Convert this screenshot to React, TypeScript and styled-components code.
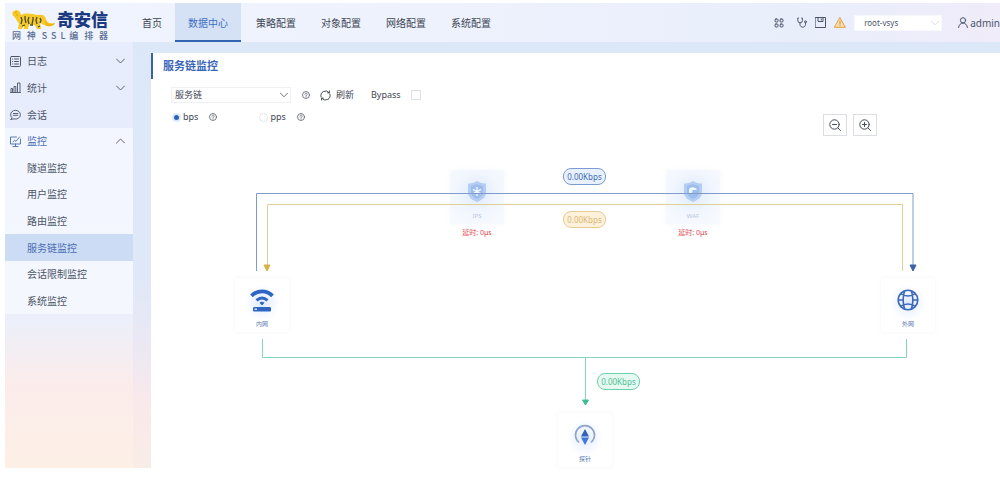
import React from 'react';
import styled, { createGlobalStyle, css } from 'styled-components';

const GlobalStyle = createGlobalStyle`
  * { box-sizing: border-box; }
  body {
    margin: 0;
    background: #fff;
    color: #3f4654;
    font-family: "Noto Sans", "Noto Sans CJK SC", sans-serif;
    font-size: 10px;
    line-height: 16px;
    overflow: hidden;
  }
  button, select, input { font: inherit; color: inherit; margin: 0; }
  a { color: inherit; text-decoration: none; }
  ul { list-style: none; margin: 0; padding: 0; }
  svg { display: block; flex: none; }
`;

const Page = styled.div`
  margin: 3px 0 9px 5px;
  min-height: calc(100vh - 12px);
  display: flex;
  flex-direction: column;
  background:
    linear-gradient(180deg, #e7edfd 0, #e6ecfc 45%, #eceffa 68%, #fbeceb 82%, #fdf0e6 100%);
`;

const Header = styled.header`
  display: flex;
  align-items: stretch;
  height: 39px;
  background: linear-gradient(90deg, #f0f4fe 0, #edf2fd 45%, #e9eefb 80%, #f0ecfa 100%);
`;

const Brand = styled.div`
  width: 96px;
  margin: 6px 22px 0 7px;
`;

const BrandRow = styled.div`
  display: flex;
  align-items: center;
  justify-content: space-between;
  height: 22px;
`;

const BrandName = styled.span`
  color: #1c3a80;
  font-size: 17px;
  font-weight: 900;
  line-height: 22px;
  white-space: nowrap;
`;

const BrandSub = styled.div`
  color: #5b6c94;
  font-family: "Noto Sans CJK SC", sans-serif;
  font-size: 9px;
  font-weight: 500;
  line-height: 10px;
  text-align-last: justify;
`;

const TopNav = styled.nav`
  display: flex;
  gap: 1px;
`;

const TopLink = styled.a<{ $active?: boolean }>`
  display: flex;
  align-items: center;
  padding: 2px 12px 0;
  border-bottom: 2px solid transparent;
  white-space: nowrap;
  ${p => p.$active && css`
    margin-right: 2px;
    padding: 2px 13px 0;
    color: #3f6fc4;
    border-color: #3563b4;
    background: #d5e1f5;
  `}
`;

const Tools = styled.div`
  display: flex;
  align-items: center;
  margin-left: auto;
  gap: 8px;
  color: #4c5568;
`;

const ToolButton = styled.button<{ $wide?: boolean }>`
  display: flex;
  padding: 0;
  margin-right: ${p => (p.$wide ? '5px' : '0')};
  border: 0;
  background: none;
`;

const SelectBox = styled.div<{ $width: number; $edge: string }>`
  position: relative;
  width: ${p => p.$width}px;
  border: 1px solid ${p => p.$edge};
  background: #fff;
  select {
    display: block;
    width: 100%;
    height: 14px;
    padding: 0 16px 0 ${p => (p.$width < 100 ? '9px' : '3px')};
    border: 0;
    background: none;
    appearance: none;
    font-size: ${p => (p.$width < 100 ? '8px' : '9px')};
    line-height: 14px;
  }
  svg {
    position: absolute;
    top: 4px;
    right: 2px;
    pointer-events: none;
  }
`;

const User = styled.a`
  display: flex;
  align-items: center;
  gap: 2px;
  margin-left: 8px;
`;

const Body = styled.div`
  flex: 1;
  display: flex;
`;

const Sidebar = styled.nav`
  flex: 0 0 128px;
  padding-top: 6px;
`;

const MenuGroup = styled.ul<{ $rows: number; $open?: boolean }>`
  display: grid;
  grid-auto-rows: 1fr;
  min-height: ${p => (p.$rows === 3 ? '80px' : '186px')};
  background: ${p => (p.$open ? 'rgba(247, 250, 255, 0.75)' : 'none')};
`;

const MenuItem = styled.a<{ $active?: boolean; $tone?: 'open' }>`
  display: flex;
  align-items: center;
  height: 100%;
  padding: 0 8px 0 5px;
  gap: 6px;
  color: ${p => (p.$active || p.$tone ? '#4a6cb3' : '#4c5568')};
  background: ${p => (p.$active ? '#ccdcf5' : 'none')};
  span { flex: 1; }
`;

const SubItem = styled(MenuItem)`
  padding-left: 22px;
`;

const Main = styled.main`
  flex: 1;
  min-width: 0;
  padding: 11px 0 0 18px;
  background: linear-gradient(180deg, #dce8f8 0, #dfe8f9 55%, #ece8f3 72%, #f9e9eb 85%, #f8ede6 100%);
`;

const Panel = styled.section`
  height: 100%;
  background: #fff;
`;

const Title = styled.h1`
  margin: 0;
  padding: 0 10px;
  border-left: 2px solid #3c5f9f;
  color: #3b66b8;
  font-size: 11px;
  font-weight: 700;
  line-height: 26px;
`;

const Filters = styled.div`
  display: flex;
  align-items: center;
  height: 16px;
  margin: 8px 0 0 20px;
  font-size: 9px;
`;

const Help = styled.span`
  display: flex;
  margin-left: 11px;
`;

const Refresh = styled.button`
  display: flex;
  align-items: center;
  gap: 5px;
  margin: 0 17px 0 10px;
  padding: 0;
  border: 0;
  background: none;
`;

const CheckLabel = styled.label`
  display: flex;
  align-items: center;
  gap: 10px;
  font-size: 9px;
  input {
    width: 10px;
    height: 10px;
    appearance: none;
    border: 1px solid #dfe1e5;
    background: #fff;
  }
`;

const Radios = styled.fieldset`
  display: flex;
  align-items: center;
  height: 16px;
  margin: 6px 0 0 21px;
  padding: 0;
  border: 0;
  font-size: 9px;
`;

const RadioLabel = styled.label<{ $gap?: boolean }>`
  display: flex;
  align-items: center;
  gap: 2px;
  margin-left: ${p => (p.$gap ? '42px' : '0')};
  input {
    width: 9px;
    height: 9px;
    appearance: none;
    border: 1px solid #e3e6ea;
    border-radius: 50%;
    background: #fff;
  }
  input:checked {
    border: 2px solid #dbe8fb;
    background: #2f62b5;
  }
`;

const Canvas = styled.div`
  position: relative;
  height: 342px;
`;

const Wires = styled.svg`
  position: absolute;
  top: 0;
  left: 0;
  z-index: 1;
`;

const ZoomTools = styled.div`
  position: absolute;
  top: -11px;
  left: 672px;
  display: flex;
  gap: 6px;
`;

const ZoomButton = styled.button`
  display: grid;
  place-items: center;
  width: 24px;
  height: 22px;
  padding: 0;
  border: 1px solid #dcdee2;
  background: #fff;
`;

const Node = styled.figure<{ $x: number; $y: number; $faded?: boolean }>`
  position: absolute;
  left: ${p => p.$x}px;
  top: ${p => p.$y}px;
  display: flex;
  flex-direction: column;
  align-items: center;
  width: 54px;
  height: 54px;
  margin: 0;
  padding-top: 10px;
  border-radius: 2px;
  background: ${p => (p.$faded
    ? 'radial-gradient(circle at 50% 42%, #dde9fc 0, #f1f6fe 48%, #f6f9fe 80%)'
    : 'radial-gradient(circle at 50% 46%, #e0eafd 0, #f6f9ff 32%, #fff 46%)')};
  box-shadow: 0 0 4px ${p => (p.$faded ? 'rgba(120, 160, 230, 0.08)' : 'rgba(60, 80, 120, 0.06)')};
  figcaption {
    margin-top: 8px;
    color: ${p => (p.$faded ? '#b9c6de' : '#5a7ab5')};
    font-size: 6px;
    line-height: 8px;
  }
`;

const Delay = styled.div<{ $x: number }>`
  position: absolute;
  left: ${p => p.$x}px;
  top: 103px;
  width: 54px;
  color: #dc4a55;
  font-size: 7px;
  line-height: 10px;
  text-align: center;
`;

const tones = {
  blue: ['#416bb4', '#7d9bd3', '#e9f1fe'],
  amber: ['#ddb56f', '#e8cb95', '#fdf1dc'],
  green: ['#4fbf97', '#6ecfab', '#e6f9f1'],
};

const Rate = styled.output<{ $x: number; $y: number; $tone: keyof typeof tones }>`
  position: absolute;
  z-index: 2;
  left: ${p => p.$x}px;
  top: ${p => p.$y}px;
  width: 43px;
  height: 17px;
  border: 1px solid ${p => tones[p.$tone][1]};
  border-radius: 8px;
  color: ${p => tones[p.$tone][0]};
  background: ${p => tones[p.$tone][2]};
  font-size: 8px;
  line-height: 15px;
  text-align: center;
`;

const stroke = { fill: 'none', stroke: 'currentColor', strokeWidth: 1, strokeLinecap: 'round', strokeLinejoin: 'round' } as const;

const Chevron = ({ up, color = '#5a6374', size = 9 }: { up?: boolean; color?: string; size?: number }) => (
  <svg width={size} height="6" viewBox="0 0 9 6" {...stroke} stroke={color}>
    <path d={up ? 'M.5 5 4.5 1l4 4' : 'M.5 1l4 4 4-4'} />
  </svg>
);

const HelpIcon = () => (
  <svg width="8" height="8" viewBox="0 0 8 8" {...stroke} stroke="#59606c" strokeWidth=".8">
    <circle cx="4" cy="4" r="3.5" />
    <path d="M2.900 3.200c0-1.500 2.300-1.400 2.300 0C5.200 4 4 4 4 5M4 6v.1" />
  </svg>
);

const Tiger = () => (
  <svg width="45" height="22" viewBox="0 0 45 22">
    <path d="M2 2C5-1 9 3 9 6c6-3 11-1 16 0 5-1 8 0 9 4 1 4 4 5 9 4-1 3-5 4-9 3-3-1-4-3-6-3l1 6h-4l-2-4-6-1-1 5h-4v-4l-2 4H6l1-6C4 12 4 8 1 7 0 5 0 3 2 2Z" fill="#f7c928" />
    <path d="M8 7h20v9l-3 1-6-2-6 2-5-1Z" fill="#f7c928" />
    <path d="M33 11c2 5 6 5 10 3-1 3-6 4-9 2Z" fill="#eeb414" />
    <path d="M9 8l1 3-1 4M13 7v3l1 4M17 8l-1 3 1 4M21 8v3l-1 4M25 8l-1 3 1 4M28 9l1 2-1 3M10 17l3-1M18 16h3M26 18l2-1" fill="none" stroke="#4b4b35" strokeWidth="1.300" />
    <path d="M3 4l2-1M4 6h2" stroke="#d99e10" strokeWidth=".9" />
  </svg>
);

const LogIcon = () => (
  <svg width="11" height="11" viewBox="0 0 11 11" {...stroke}>
    <rect x=".5" y=".5" width="10" height="10" rx="1" />
    <path d="M2.500 3h.2M4.500 3h4M2.500 5.500h.2M4.500 5.500h4M2.500 8h.2M4.500 8h4" />
  </svg>
);
const StatIcon = () => (
  <svg width="11" height="11" viewBox="0 0 11 11" {...stroke} strokeWidth=".9">
    <path d="M.5 10.500h10M1 10V6.500h1.500V10M4 10V4.500h1.800V10M7.500 10V1H10v9" />
  </svg>
);
const ChatIcon = () => (
  <svg width="11" height="11" viewBox="0 0 11 11" {...stroke} strokeWidth=".9">
    <path d="M1 10.300 2 8.800A4.900 4.400 0 1 1 4 9.900L1 10.300ZM3.300 4.500h4.500M3.300 6.300h4.500" />
  </svg>
);
const MonitorIcon = () => (
  <svg width="11" height="11" viewBox="0 0 11 11" {...stroke} strokeWidth=".9">
    <path d="M6.500 1H.5v7h10V3M5.500 8v2M3 10.500h5M3 5.800l1.500-1.500 1.500 1L9.500 1" />
  </svg>
);

const ShieldIcon = ({ variant }: { variant: 'star' | 'lock' }) => (
  <svg width="20" height="24" viewBox="0 0 20 24">
    <path d="M10 1c3 2 6 2.500 9 2.500V12c0 5-4 8-9 10-5-2-9-5-9-10V3.500C4 3.500 7 3 10 1Z" fill="#b3cdf4" />
    <path d="M10 4c2 1 4 1.700 6 1.700V12c0 3-2.500 5.500-6 7-3.500-1.500-6-4-6-7V5.700C6 5.700 8 5 10 4Z" fill="#9dbdec" />
    {variant === 'star'
      ? <path d="M10 7v9M6 9.300l8 4.500M6 13.800l8-4.500" stroke="#eef5ff" strokeWidth="1.500" />
      : <path d="M6 13V9.500c1-3 7-3 8 .5H9.500v2l-1.500 2Z" fill="#eef5ff" />}
  </svg>
);

const RouterIcon = () => (
  <svg width="24" height="24" viewBox="0 0 24 24" fill="none" stroke="#2f66c4">
    <path d="M1.500 7.800c6-6 15-6 21 0" strokeWidth="3.800" />
    <path d="M6.500 12.300c3.500-3 7.500-3 11 0" strokeWidth="3" />
    <path d="M9.500 14.700q2.500-2 5 0L12 17.500Z" fill="#2f66c4" stroke="none" />
    <rect x="3" y="19" width="18" height="4.500" rx="1.200" fill="#2f66c4" stroke="none" />
    <path d="M4.500 21.200H7" stroke="#fff" strokeWidth="1.200" />
  </svg>
);

const GlobeIcon = () => (
  <svg width="24" height="24" viewBox="0 0 24 24" fill="none" stroke="#3a68b8" strokeWidth="1.600">
    <circle cx="12" cy="12" r="9.800" />
    <path d="M8.500 3C7 8 7 16 8.500 21M15.500 3c1.500 5 1.500 13 0 18M4.500 5.500c4 3.300 11 3.300 15 0M4.500 18.500c4-3.300 11-3.300 15 0M2 12h5M17 12h5" />
  </svg>
);

const ProbeIcon = () => (
  <svg width="24" height="24" viewBox="0 0 24 24">
    <path d="M6 19.500a9.500 9.500 0 1 1 12 0" fill="none" stroke="#8ea4c9" strokeWidth="1.600" />
    <path d="M12 6l4 7.500H8Z" fill="#2f62b8" />
    <path d="M8 14.500h8L12 22Z" fill="#3f78d8" />
  </svg>
);

const ZoomIcon = ({ plus }: { plus?: boolean }) => (
  <svg width="12" height="12" viewBox="0 0 12 12" {...stroke} stroke="#444b57">
    <circle cx="5.500" cy="5.500" r="4.700" />
    <path d={`M9 9l2.500 2.500M3.500 5.500h4${plus ? 'M5.500 3.500v4' : ''}`} />
  </svg>
);

const logs = [
  { text: '日志', icon: <LogIcon />, expandable: true },
  { text: '统计', icon: <StatIcon />, expandable: true },
  { text: '会话', icon: <ChatIcon />, expandable: false },
];
const monitors = ['隧道监控', '用户监控', '路由监控', '服务链监控', '会话限制监控', '系统监控'];
const sections = ['首页', '数据中心', '策略配置', '对象配置', '网络配置', '系统配置'];

export default function App() {
  return (
    <>
      <GlobalStyle />
      <Page>
        <Header>
          <Brand>
            <BrandRow><Tiger /><BrandName>奇安信</BrandName></BrandRow>
            <BrandSub>网 神 S S L 编 排 器</BrandSub>
          </Brand>
          <TopNav>
            {sections.map(s => <TopLink key={s} href="#" $active={s === '数据中心'}>{s}</TopLink>)}
          </TopNav>
          <Tools>
            <ToolButton $wide aria-label="应用">
              <svg width="10" height="10" viewBox="0 0 10 10" {...stroke}>
                <rect x="1" y="1" width="3" height="3" rx="1" /><rect x="6" y="1" width="3" height="3" rx="1" />
                <rect x="1" y="6" width="3" height="3" rx="1" /><rect x="6" y="6" width="3" height="3" rx="1" />
              </svg>
            </ToolButton>
            <ToolButton aria-label="诊断">
              <svg width="10" height="11" viewBox="0 0 10 11" {...stroke}>
                <path d="M1.500 1H.8v2.500a2.300 2.300 0 0 0 4.600 0V1h-.7M3 6v1.500c0 3.500 5.500 3.500 5.500 0V6" />
                <circle cx="8.500" cy="4.800" r="1" />
              </svg>
            </ToolButton>
            <ToolButton aria-label="保存">
              <svg width="11" height="11" viewBox="0 0 11 11" {...stroke}>
                <path d="M.5.5h10v10H.5ZM3 .5v4h5v-4M6.300 2v1" />
              </svg>
            </ToolButton>
            <ToolButton aria-label="告警">
              <svg width="12" height="11" viewBox="0 0 12 11" {...stroke} stroke="#e5a04c">
                <path d="M6 .8 11.300 10.300H.7Z" fill="#fbdcae" /><path d="M6 4v3M6 8.600v.1" strokeWidth="1.300" />
              </svg>
            </ToolButton>
            <SelectBox $width={88} $edge="#f7f9fe">
              <select aria-label="虚拟系统"><option>root-vsys</option></select>
              <Chevron color="#d3d7de" size={8} />
            </SelectBox>
            <User href="#">
              <svg width="10" height="11" viewBox="0 0 10 11" {...stroke}>
                <circle cx="5" cy="3.300" r="2.600" /><path d="M.6 10.500c.4-6 8.400-6 8.800 0" />
              </svg>
              admin
            </User>
          </Tools>
        </Header>
        <Body>
          <Sidebar>
            <MenuGroup $rows={3}>
              {logs.map(m => (
                <li key={m.text}>
                  <MenuItem href="#">{m.icon}<span>{m.text}</span>{m.expandable && <Chevron />}</MenuItem>
                </li>
              ))}
            </MenuGroup>
            <MenuGroup $rows={7} $open>
              <li><MenuItem href="#" $tone="open"><MonitorIcon /><span>监控</span><Chevron up /></MenuItem></li>
              {monitors.map(m => <li key={m}><SubItem href="#" $active={m === '服务链监控'}>{m}</SubItem></li>)}
            </MenuGroup>
          </Sidebar>
          <Main>
            <Panel>
              <Title>服务链监控</Title>
              <Filters>
                <SelectBox $width={120} $edge="#eff0f2">
                  <select aria-label="服务链"><option>服务链</option></select>
                  <Chevron size={8} />
                </SelectBox>
                <Help><HelpIcon /></Help>
                <Refresh>
                  <svg width="11" height="11" viewBox="0 0 11 11" {...stroke} stroke="#444b57">
                    <path d="M1 6.800A4.700 4.700 0 0 1 9.200 2.700M10 4.200A4.700 4.700 0 0 1 1.800 8.300M9.400 1v1.900H7.700M1.600 10V8.100h1.700" />
                  </svg>
                  刷新
                </Refresh>
                <CheckLabel>Bypass<input type="checkbox" /></CheckLabel>
              </Filters>
              <Radios>
                <RadioLabel><input type="radio" name="unit" defaultChecked />bps</RadioLabel>
                <Help><HelpIcon /></Help>
                <RadioLabel $gap><input type="radio" name="unit" />pps</RadioLabel>
                <Help><HelpIcon /></Help>
              </Radios>
              <Canvas>
                <ZoomTools>
                  <ZoomButton aria-label="缩小"><ZoomIcon /></ZoomButton>
                  <ZoomButton aria-label="放大"><ZoomIcon plus /></ZoomButton>
                </ZoomTools>
                <Node $x={299} $y={45} $faded><ShieldIcon variant="star" /><figcaption>IPS</figcaption></Node>
                <Node $x={515} $y={45} $faded><ShieldIcon variant="lock" /><figcaption>WAF</figcaption></Node>
                <Delay $x={299}>延时: 0μs</Delay>
                <Delay $x={515}>延时: 0μs</Delay>
                <Node $x={84} $y={153}><RouterIcon /><figcaption>内网</figcaption></Node>
                <Node $x={730} $y={153}><GlobeIcon /><figcaption>外网</figcaption></Node>
                <Node $x={407} $y={288}><ProbeIcon /><figcaption>探针</figcaption></Node>
                <Wires width="849" height="342" viewBox="0 0 849 342" fill="none">
                  <path d="M105.500 146V68.500h656.500V143" stroke="#7f9acb" />
                  <path d="M759 140h6l-3 6Z" fill="#3b62aa" stroke="#3b62aa" />
                  <path d="M751.500 146V79.500H116.500V143" stroke="#dfd09a" />
                  <path d="M113 140h6l-3 6Z" fill="#d6b144" stroke="#d6b144" />
                  <path d="M111.500 214v18.500h644V214M434.500 232.500V277" stroke="#85d6b8" />
                  <path d="M431.500 275h6l-3 5Z" fill="#3fbd90" stroke="#3fbd90" />
                </Wires>
                <Rate $x={412} $y={43} $tone="blue">0.00Kbps</Rate>
                <Rate $x={412} $y={86} $tone="amber">0.00Kbps</Rate>
                <Rate $x={446} $y={248} $tone="green">0.00Kbps</Rate>
              </Canvas>
            </Panel>
          </Main>
        </Body>
      </Page>
    </>
  );
}
